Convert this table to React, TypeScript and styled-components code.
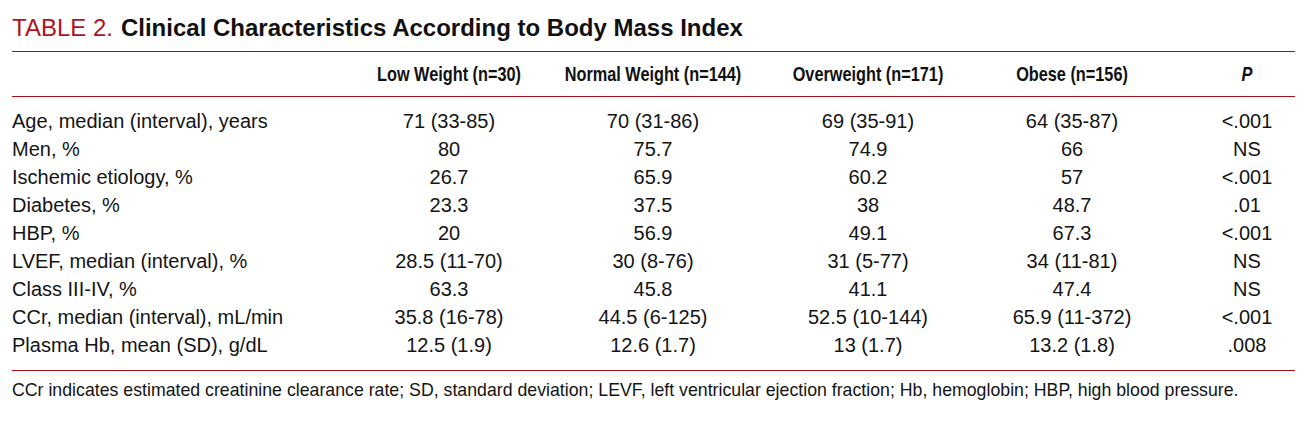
import React from "react";
import styled, { createGlobalStyle } from "styled-components";

const Global = createGlobalStyle`
  html, body { margin: 0; padding: 0; background: #ffffff; }
  body { font-family: "Liberation Sans", Arial, sans-serif; color: #141414; }
`;

const RED = "#b3111e";
const LINE = "#a8101b";
const COLS = "371px 132px 276px 154px 254px 96px";

const Page = styled.div`
  width: 1283px;
  padding: 14px 0 0 12px;
`;

const Title = styled.h1`
  margin: 0 0 9px 0;
  font-size: 24px;
  line-height: 28px;
  font-weight: 400;
  white-space: nowrap;
`;

const TitleLabel = styled.span`
  color: ${RED};
  margin-right: 8px;
`;

const TitleText = styled.span`
  color: #111;
  font-weight: 700;
`;

const Table = styled.div`
  border-top: 1px solid ${LINE};
  border-bottom: 1px solid ${LINE};
`;

const HeaderRow = styled.div`
  display: grid;
  grid-template-columns: ${COLS};
  height: 44px;
  align-items: center;
  border-bottom: 1px solid ${LINE};
`;

const Body = styled.div`
  padding: 10px 0 11px 0;
`;

const Row = styled.div`
  display: grid;
  grid-template-columns: ${COLS};
  height: 28px;
  align-items: center;
`;

const HeadCell = styled.div`
  display: flex;
  justify-content: center;
  white-space: nowrap;
  font-weight: 700;
  font-size: 21px;
  line-height: 26px;
  color: #111;
  transform: scaleX(0.775);
  transform-origin: center;
`;

const Cell = styled.div<{ $label?: boolean }>`
  display: flex;
  justify-content: ${(p) => (p.$label ? "flex-start" : "center")};
  white-space: nowrap;
  font-size: 20px;
  line-height: 28px;
  color: #141414;
`;

const Foot = styled.p`
  margin: 7px 0 0 0;
  font-size: 19px;
  line-height: 24px;
  color: #141414;
  white-space: nowrap;
  transform: scaleX(0.933);
  transform-origin: left center;
`;

const headers = [
  "",
  "Low Weight (n=30)",
  "Normal Weight (n=144)",
  "Overweight (n=171)",
  "Obese (n=156)",
];

const rows: string[][] = [
  ["Age, median (interval), years", "71 (33-85)", "70 (31-86)", "69 (35-91)", "64 (35-87)", "<.001"],
  ["Men, %", "80", "75.7", "74.9", "66", "NS"],
  ["Ischemic etiology, %", "26.7", "65.9", "60.2", "57", "<.001"],
  ["Diabetes, %", "23.3", "37.5", "38", "48.7", ".01"],
  ["HBP, %", "20", "56.9", "49.1", "67.3", "<.001"],
  ["LVEF, median (interval), %", "28.5 (11-70)", "30 (8-76)", "31 (5-77)", "34 (11-81)", "NS"],
  ["Class III-IV, %", "63.3", "45.8", "41.1", "47.4", "NS"],
  ["CCr, median (interval), mL/min", "35.8 (16-78)", "44.5 (6-125)", "52.5 (10-144)", "65.9 (11-372)", "<.001"],
  ["Plasma Hb, mean (SD), g/dL", "12.5 (1.9)", "12.6 (1.7)", "13 (1.7)", "13.2 (1.8)", ".008"],
];

export default function App() {
  return (
    <Page>
      <Global />
      <Title>
        <TitleLabel>TABLE 2.</TitleLabel>
        <TitleText>Clinical Characteristics According to Body Mass Index</TitleText>
      </Title>
      <Table>
        <HeaderRow>
          {headers.map((h, i) => (
            <HeadCell key={i}>{h}</HeadCell>
          ))}
          <HeadCell>
            <i>P</i>
          </HeadCell>
        </HeaderRow>
        <Body>
          {rows.map((r, i) => (
            <Row key={i}>
              {r.map((c, j) => (
                <Cell key={j} $label={j === 0}>
                  {c}
                </Cell>
              ))}
            </Row>
          ))}
        </Body>
      </Table>
      <Foot>
        CCr indicates estimated creatinine clearance rate; SD, standard deviation; LEVF, left ventricular ejection
        fraction; Hb, hemoglobin; HBP, high blood pressure.
      </Foot>
    </Page>
  );
}
